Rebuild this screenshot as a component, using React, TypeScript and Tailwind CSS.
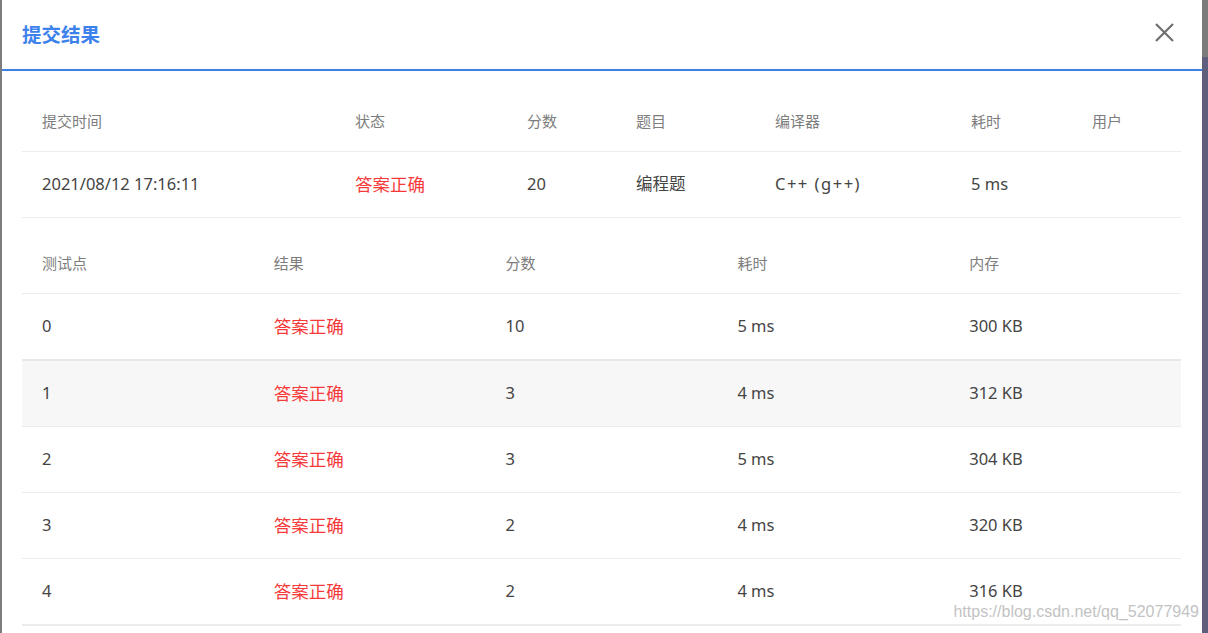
import React from "react";

const font = { fontFamily: '"Noto Sans", "Noto Sans CJK SC", sans-serif' };

const t1Widths = ["w-[313px]", "w-[172px]", "w-[109px]", "w-[139px]", "w-[196px]", "w-[121px]", "w-[109px]"];
const t1Head = ["提交时间", "状态", "分数", "题目", "编译器", "耗时", "用户"];

const rows = [
  { id: "0", score: "10", time: "5 ms", mem: "300 KB" },
  { id: "1", score: "3", time: "4 ms", mem: "312 KB" },
  { id: "2", score: "3", time: "5 ms", mem: "304 KB" },
  { id: "3", score: "2", time: "4 ms", mem: "320 KB" },
  { id: "4", score: "2", time: "4 ms", mem: "316 KB" },
];

function Ok() {
  return <span className="text-[17.5px] text-[#f63a3a]">答案正确</span>;
}

export default function App() {
  return (
    <div className="relative flex h-[633px] w-[1208px] overflow-hidden bg-[#808080]" style={font}>
      <div className="w-[2px] bg-[#7d7d7d]" />
      <div className="flex w-[1200px] flex-col bg-white">
        <div className="flex h-[71px] items-center justify-between border-b-2 border-[#3f80e6] pl-[20px] pr-[28px]">
          <div className="text-[19.5px] font-bold text-[#3d82ec]">提交结果</div>
          <svg width="19" height="19" viewBox="0 0 19 19" className="mt-[-4px]">
            <path d="M1 1 L18 18 M18 1 L1 18" stroke="#6f6f6f" strokeWidth="2.2" fill="none" />
          </svg>
        </div>
        <div className="flex flex-col pl-[20px] pr-[21px] pt-[21px]">
          {/* table 1 */}
          <div className="flex h-[60px] items-center border-b border-[#ececec] text-[15px] text-[#7d7d7d]">
            {t1Head.map((h, i) => (
              <div key={h} className={`${t1Widths[i]} pl-[20px]`}>{h}</div>
            ))}
          </div>
          <div className="flex h-[66px] items-center border-b border-[#ececec] text-[16.5px] text-[#444]">
            <div className={`${t1Widths[0]} pl-[20px]`}>2021/08/12 17:16:11</div>
            <div className={`${t1Widths[1]} pl-[20px]`}><Ok /></div>
            <div className={`${t1Widths[2]} pl-[20px]`}>20</div>
            <div className={`${t1Widths[3]} pl-[20px]`}>编程题</div>
            <div className={`${t1Widths[4]} pl-[20px] tracking-[1.5px]`}>C++ (g++)</div>
            <div className={`${t1Widths[5]} pl-[20px]`}>5 ms</div>
            <div className={`${t1Widths[6]} pl-[20px]`}></div>
          </div>
          {/* table 2 */}
          <div className="mt-[16px] grid h-[60px] grid-cols-5 items-center border-b border-[#ececec] text-[15px] text-[#7d7d7d]">
            <div className="pl-[20px]">测试点</div>
            <div className="pl-[20px]">结果</div>
            <div className="pl-[20px]">分数</div>
            <div className="pl-[20px]">耗时</div>
            <div className="pl-[20px]">内存</div>
          </div>
          {rows.map((r, i) => (
            <div
              key={r.id}
              className={
                i === 0
                  ? "grid h-[67px] grid-cols-5 items-center border-b-2 border-[#e8e8e8] text-[16.5px] text-[#444]"
                  : i === 1
                  ? "grid h-[66px] grid-cols-5 items-center border-b border-[#ececec] bg-[#f7f7f7] text-[16.5px] text-[#444]"
                  : i === 4
                  ? "grid h-[67px] grid-cols-5 items-center border-b-2 border-[#ececec] text-[16.5px] text-[#444]"
                  : "grid h-[66px] grid-cols-5 items-center border-b border-[#ececec] text-[16.5px] text-[#444]"
              }
            >
              <div className="pl-[20px]">{r.id}</div>
              <div className="pl-[20px]"><Ok /></div>
              <div className="pl-[20px]">{r.score}</div>
              <div className="pl-[20px]">{r.time}</div>
              <div className="pl-[20px]">{r.mem}</div>
            </div>
          ))}
        </div>
      </div>
      <div className="flex flex-1 flex-col">
        <div className="h-[57px] bg-[#7b7b7b]" />
        <div className="flex-1 bg-[#5f5e7d]" />
      </div>
      <div
        className="absolute bottom-[9px] right-[9px] text-[16px] text-[#b4b4b4] opacity-80"
        style={{ fontFamily: '"Liberation Sans", Arial, sans-serif' }}
      >
        https://blog.csdn.net/qq_52077949
      </div>
    </div>
  );
}
